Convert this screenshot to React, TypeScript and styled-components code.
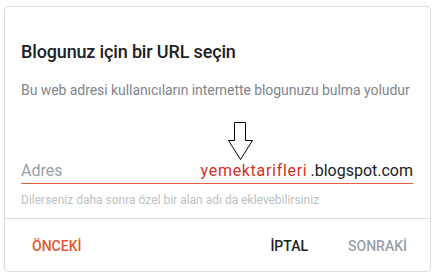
import * as React from "react";
import styled, { createGlobalStyle } from "styled-components";

const GlobalStyle = createGlobalStyle`
  html, body {
    margin: 0;
    padding: 0;
    background: #ffffff;
  }
  body {
    font-family: Roboto, "Noto Sans", Arial, sans-serif;
  }
`;

const Card = styled.div`
  box-sizing: border-box;
  width: 427px;
  height: 266px;
  margin: 6px 0 0 4px;
  border: 1px solid #dadce0;
  border-radius: 4px;
  display: flex;
  flex-direction: column;
  overflow: hidden;
`;

const Body = styled.div`
  height: 211px;
  padding: 33px 17px 0 16px;
  box-sizing: border-box;
`;

const Title = styled.h2`
  margin: 0;
  font-size: 18px;
  line-height: 24px;
  font-weight: 500;
  letter-spacing: -0.15px;
  color: #202124;
`;

const Subtitle = styled.p`
  margin: 16px 0 0;
  font-size: 14px;
  line-height: 20px;
  letter-spacing: -0.06px;
  white-space: nowrap;
  color: #80868b;
`;

const ArrowRow = styled.div`
  height: 40px;
  margin-top: 21px;
  padding-left: 206px;
`;

const Field = styled.div`
  display: flex;
  align-items: baseline;
  padding-bottom: 2px;
  border-bottom: 1px solid #e0603f;
  font-size: 16px;
  line-height: 20px;
`;

const Label = styled.span`
  flex: 1;
  color: #9aa0a6;
`;

const Name = styled.span`
  color: #d93025;
  letter-spacing: 0.7px;
  margin-right: 3px;
`;

const Domain = styled.span`
  color: #202124;
`;

const Helper = styled.div`
  margin-top: 8px;
  height: 12px;
  overflow: hidden;
  font-size: 12px;
  line-height: 16px;
  color: #bdc1c6;
`;

const Footer = styled.div`
  flex: 1;
  display: flex;
  align-items: center;
  border-top: 1px solid #dadce0;
  padding: 1px 15px 0 19px;
`;

const Button = styled.button<{ $tone: "accent" | "plain" | "disabled" }>`
  border: 0;
  background: none;
  padding: 0 8px;
  font-family: inherit;
  font-size: 14px;
  font-weight: 500;
  line-height: 36px;
  cursor: pointer;
  color: ${p => (p.$tone === "accent" ? "#e8572e" : p.$tone === "plain" ? "#202124" : "#9aa0a6")};
`;

const Spacer = styled.div`
  flex: 1;
`;

const Gap = styled.div`
  width: 24px;
`;

const DownArrow = () => (
  <svg width="27" height="40" viewBox="0 0 27 40">
    <path d="M7.5 1.5 H18.5 V19.5 H25.5 L13.5 38.5 L1.5 19.5 H7.5 Z" fill="#fff" stroke="#000" strokeWidth="1" />
  </svg>
);

const App = () => (
  <>
    <GlobalStyle />
    <Card>
      <Body>
        <Title>Blogunuz için bir URL seçin</Title>
        <Subtitle>Bu web adresi kullanıcıların internette blogunuzu bulma yoludur</Subtitle>
        <ArrowRow>
          <DownArrow />
        </ArrowRow>
        <Field>
          <Label>Adres</Label>
          <Name>yemektarifleri</Name>
          <Domain>.blogspot.com</Domain>
        </Field>
        <Helper>Dilerseniz daha sonra özel bir alan adı da ekleyebilirsiniz</Helper>
      </Body>
      <Footer>
        <Button $tone="accent">ÖNCEKİ</Button>
        <Spacer />
        <Button $tone="plain">İPTAL</Button>
        <Gap />
        <Button $tone="disabled">SONRAKİ</Button>
      </Footer>
    </Card>
  </>
);

export default App;
